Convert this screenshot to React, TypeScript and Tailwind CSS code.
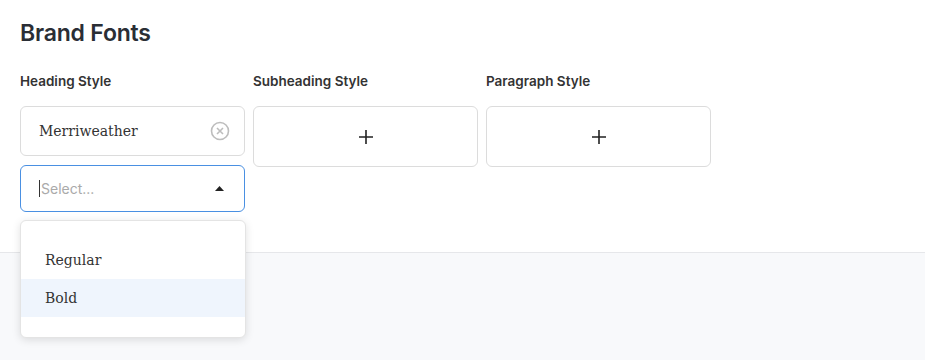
import { useState } from "react";

const serif = { fontFamily: '"DejaVu Serif", "Liberation Serif", serif' };

const PlusBox = () => (
  <button className="flex h-[61px] w-[225px] items-center justify-center rounded-md border border-[#dcdcdc] bg-white">
    <svg width="16" height="16" viewBox="0 0 16 16" fill="none" stroke="#222" strokeWidth="1.6">
      <path d="M8 1v14M1 8h14" />
    </svg>
  </button>
);

export default function App() {
  const [selected, setSelected] = useState("Bold");
  const options = ["Regular", "Bold"];

  return (
    <div className="min-h-[360px] bg-[#f8f9fb] font-['Inter',sans-serif]">
      <div className="relative h-[253px] border-b border-[#e6e7ea] bg-white px-5 pt-[19px]">
        <h2 className="text-[23px] font-semibold leading-[28px] tracking-[-0.2px] text-[#2a2e35]">Brand Fonts</h2>

        <div className="mt-[26px] flex gap-2">
          {/* heading */}
          <div className="flex w-[225px] flex-col">
            <span className="text-[13.5px] font-semibold leading-4 text-[#333]">Heading Style</span>
            <div className="mt-[17px] flex h-[50px] items-center justify-between rounded-md border border-[#dcdcdc] bg-white pl-[18px] pr-[14px]">
              <span style={serif} className="text-[14px] text-[#333]">Merriweather</span>
              <svg width="20" height="20" viewBox="0 0 20 20" fill="none" stroke="#bdbdbd" strokeWidth="1.6">
                <circle cx="10" cy="10" r="8.5" />
                <path d="M7 7l6 6M13 7l-6 6" />
              </svg>
            </div>
            <div className="relative mt-[9px]">
              <div className="flex h-[47px] items-center justify-between rounded-md border border-[#4a90e2] bg-white pl-[18px] pr-[20px]">
                <span className="flex items-center text-[14px] text-[#aaa]">
                  <span className="mr-[1px] inline-block h-[17px] w-px bg-[#333]" />
                  Select...
                </span>
                <svg width="9" height="5" viewBox="0 0 9 5">
                  <path d="M0 5L4.5 0 9 5z" fill="#222" />
                </svg>
              </div>
              <div className="absolute left-0 top-[55px] z-10 w-[226px] rounded-md border border-[#e4e4e4] bg-white py-5 shadow-[0_2px_8px_rgba(0,0,0,0.12)]">
                {options.map((o) => (
                  <div
                    key={o}
                    onClick={() => setSelected(o)}
                    style={serif}
                    className={
                      "flex h-[38px] cursor-pointer items-center pl-[24px] text-[14px] text-[#333] " +
                      (selected === o ? "bg-[#eff5fd]" : "")
                    }
                  >
                    {o}
                  </div>
                ))}
              </div>
            </div>
          </div>

          <div className="flex w-[225px] flex-col">
            <span className="text-[13.5px] font-semibold leading-4 text-[#333]">Subheading Style</span>
            <div className="mt-[17px]">
              <PlusBox />
            </div>
          </div>

          <div className="flex w-[225px] flex-col">
            <span className="text-[13.5px] font-semibold leading-4 text-[#333]">Paragraph Style</span>
            <div className="mt-[17px]">
              <PlusBox />
            </div>
          </div>
        </div>
      </div>
    </div>
  );
}
